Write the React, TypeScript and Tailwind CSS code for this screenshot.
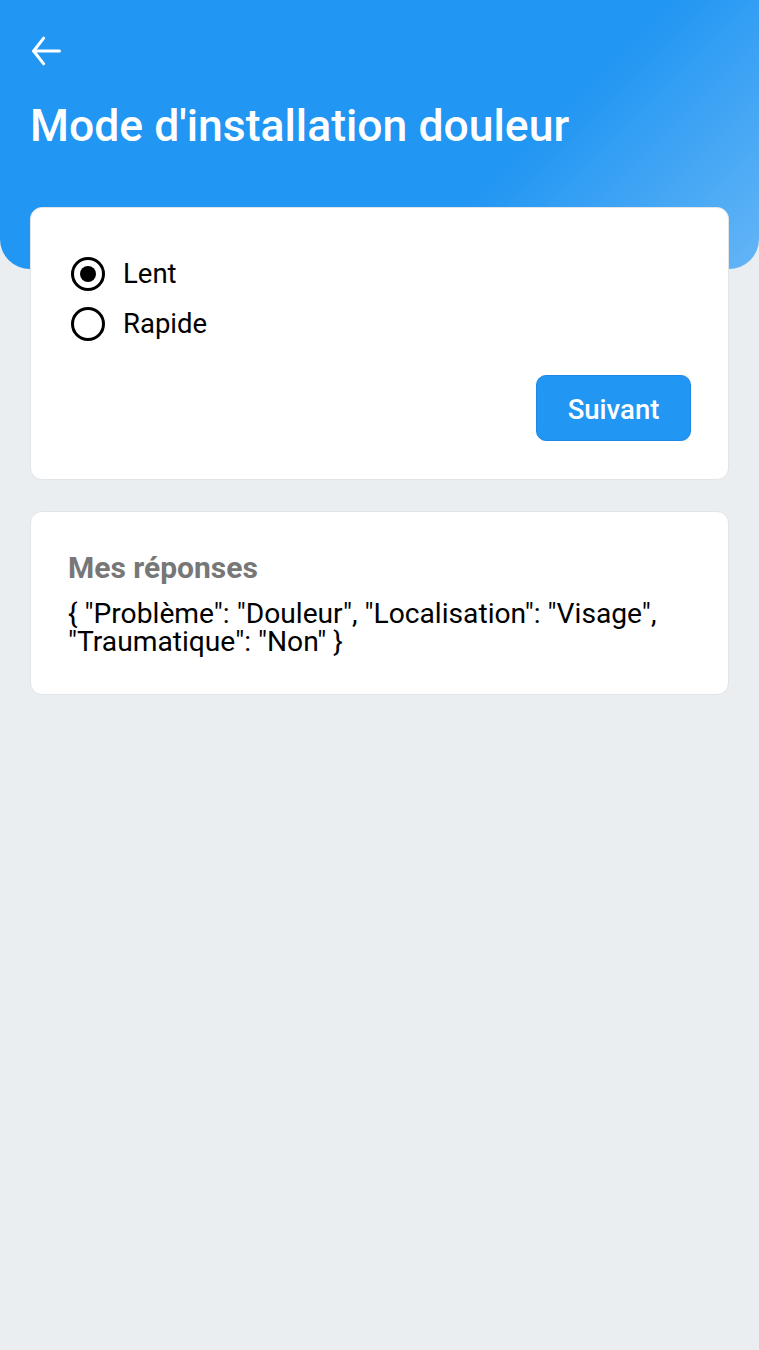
import React from "react";

export default function App() {
  return (
    <div className="min-h-[1350px] w-full bg-[#eaeef1] relative" style={{ fontFamily: "Roboto, 'Noto Sans', sans-serif" }}>
      <div className="h-[269px] rounded-b-[30px] bg-[linear-gradient(135deg,#2196f3_0%,#2196f3_65%,#64b5f6_100%)] px-[30px] pt-[31px]">
        <svg width="40" height="40" viewBox="0 0 24 24" fill="none" stroke="white" strokeWidth="1.8" strokeLinecap="round" strokeLinejoin="round" className="-ml-[3px]">
          <path d="M19.5 12H4" />
          <path d="M10 4.3L4 12l6 7.7" />
        </svg>
        <h1 className="mt-[27px] text-[44.5px] leading-[56px] font-medium text-white">Mode d'installation douleur</h1>
      </div>
      <div className="px-[30px] -mt-[62px] flex flex-col gap-[31px]">
        <div className="bg-white rounded-[12px] border border-[#e2e5e8] h-[273px] pt-[49px] px-[40px]">
          <div className="flex flex-col gap-[16px]">
            <div className="flex items-center gap-[18px]">
              <div className="w-[34px] h-[34px] rounded-full border-[3px] border-black flex items-center justify-center">
                <div className="w-[16px] h-[16px] rounded-full bg-black" />
              </div>
              <span className="text-[27.5px] leading-[34px] text-black">Lent</span>
            </div>
            <div className="flex items-center gap-[18px]">
              <div className="w-[34px] h-[34px] rounded-full border-[3px] border-black" />
              <span className="text-[27.5px] leading-[34px] text-black">Rapide</span>
            </div>
          </div>
          <div className="flex justify-end mt-[34px] -mr-[3px]">
            <button className="w-[155px] h-[66px] rounded-[10px] bg-[#2196f3] border border-[#1e88e5] text-white text-[27.5px] font-medium pt-[3px]">Suivant</button>
          </div>
        </div>
        <div className="bg-white rounded-[12px] border border-[#e2e5e8] h-[184px] pt-[38px] px-[37px]">
          <div className="text-[30px] leading-[36px] font-bold text-[#777777]">Mes réponses</div>
          <div className="mt-[14px] text-[28.2px] leading-[28px] text-black">{'{ "Problème": "Douleur", "Localisation": "Visage", "Traumatique": "Non" }'}</div>
        </div>
      </div>
    </div>
  );
}
